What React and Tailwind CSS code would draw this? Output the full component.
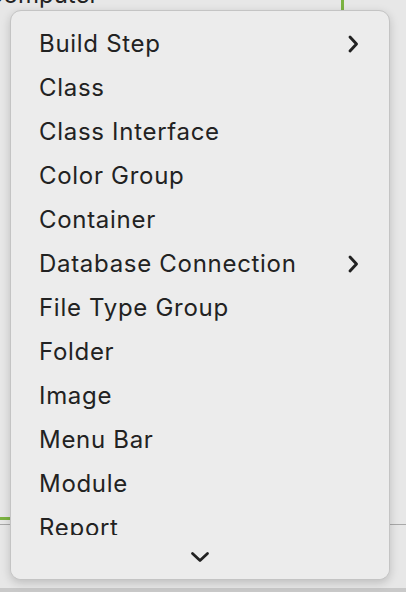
import React from "react";

const items = [
    { label: "Build Step", sub: true },
    { label: "Class" },
    { label: "Class Interface" },
    { label: "Color Group" },
    { label: "Container" },
    { label: "Database Connection", sub: true },
    { label: "File Type Group" },
    { label: "Folder" },
    { label: "Image" },
    { label: "Menu Bar" },
    { label: "Module" },
    { label: "Report" },
];

const ChevronRight = () => (
    <svg width="14" height="20" viewBox="0 0 14 20" fill="none">
        <path d="M4 3l6.5 7-6.5 7" stroke="#222" strokeWidth="2.9" strokeLinecap="round" strokeLinejoin="round" />
    </svg>
);

const ChevronDown = () => (
    <svg width="20" height="12" viewBox="0 0 20 12" fill="none">
        <path d="M2.5 2.5l7.5 7 7.5-7" stroke="#222" strokeWidth="2.8" strokeLinecap="round" strokeLinejoin="round" />
    </svg>
);

export default function App() {
    return (
        <div
            className="relative w-[406px] h-[592px] overflow-hidden bg-[#e7e7e7] flex flex-col"
            style={{ fontFamily: "Inter, 'Noto Sans', sans-serif" }}
        >
            {/* background window behind the menu */}
            <div className="flex h-[12px]">
                <div className="w-[355px] -mt-[20px] -ml-[14px] text-[24px] text-[#222] leading-[30px] whitespace-nowrap">Computer</div>
                <div className="w-[3px] bg-[#7cb342]" />
            </div>
            <div className="flex-1" />
            <div className="w-[200px] h-[3px] bg-[#7cb342]" />
            <div className="h-[4px]" />
            <div className="h-[1px] bg-[#a8a8a8]" />
            <div className="h-[63px]" />
            <div className="h-[4px] bg-[#c9c9c9]" />

            {/* popup menu */}
            <div className="absolute left-[10px] top-[10px] w-[380px] h-[570px] rounded-[11px] bg-[#ececec] border border-[#c4c4c4] shadow-[0_3px_10px_rgba(0,0,0,0.18)] overflow-hidden">
                <div className="flex flex-col pt-[11px]">
                    {items.map((item, i) => (
                        <div key={i} className="flex items-center justify-between h-[44px] pl-[28px] pr-[29px] text-[24px] tracking-[0.7px] text-[#222] leading-none">
                            <span>{item.label}</span>
                            {item.sub && <ChevronRight />}
                        </div>
                    ))}
                </div>
                <div className="absolute left-0 right-0 bottom-0 h-[44px] bg-[#ececec] flex justify-center pt-[16px]">
                    <ChevronDown />
                </div>
            </div>
        </div>
    );
}
